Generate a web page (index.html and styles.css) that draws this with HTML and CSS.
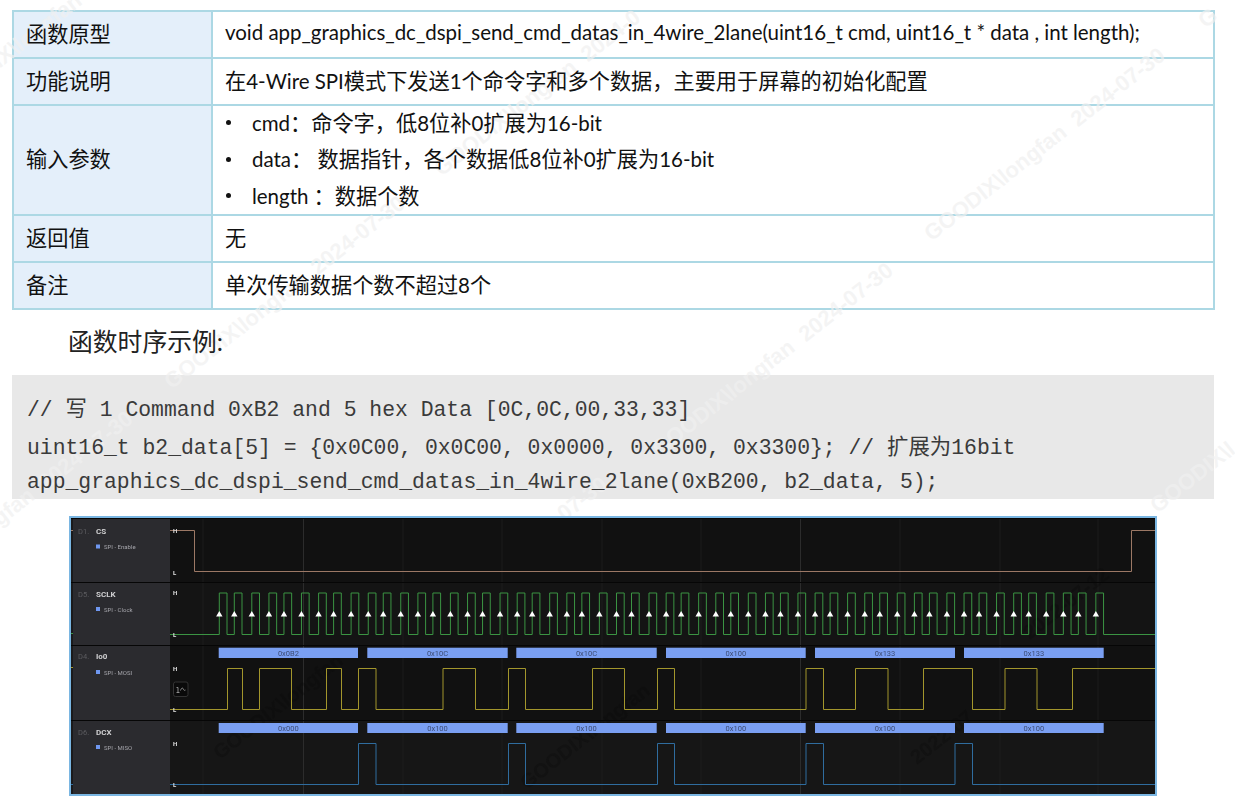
FILE: index.html
```html
<!DOCTYPE html>
<html lang="zh-CN">
<head>
    <meta charset="UTF-8">
    <title>app_graphics_dc_dspi_send_cmd_datas_in_4wire_2lane</title>
    <link rel="stylesheet" href="styles.css">
</head>
<body>
    <table class="api-table">
        <tr>
            <th><span>函数原型</span></th>
            <td><span class="lat">void app_graphics_dc_dspi_send_cmd_datas_in_4wire_2lane(uint16_t cmd, uint16_t * data , int length);</span></td>
        </tr>
        <tr>
            <th><span>功能说明</span></th>
            <td><span>在<span class="lat">4-Wire SPI</span>模式下发送<span class="lat">1</span>个命令字和多个数据，主要用于屏幕的初始化配置</span></td>
        </tr>
        <tr class="row-params">
            <th><span>输入参数</span></th>
            <td>
                <ul class="params">
                    <li><span><span class="lat">cmd</span>：命令字，低<span class="lat">8</span>位补<span class="lat">0</span>扩展为<span class="lat">16-bit</span></span></li>
                    <li><span><span class="lat">data</span>： 数据指针，各个数据低<span class="lat">8</span>位补<span class="lat">0</span>扩展为<span class="lat">16-bit</span></span></li>
                    <li><span><span class="lat">length </span>：数据个数</span></li>
                </ul>
            </td>
        </tr>
        <tr>
            <th><span>返回值</span></th>
            <td><span>无</span></td>
        </tr>
        <tr>
            <th><span>备注</span></th>
            <td><span>单次传输数据个数不超过<span class="lat">8</span>个</span></td>
        </tr>
    </table>

    <p class="section-title">函数时序示例:</p>

    <div class="code">
        <div class="code-line line-1">// 写 1 Command 0xB2 and 5 hex Data [0C,0C,00,33,33]</div>
        <div class="code-line line-2">uint16_t b2_data[5] = {0x0C00, 0x0C00, 0x0000, 0x3300, 0x3300}; // 扩展为16bit</div>
        <div class="code-line line-3">app_graphics_dc_dspi_send_cmd_datas_in_4wire_2lane(0xB200, b2_data, 5);</div>
    </div>

    <!-- logic analyzer capture, coordinates in the viewBox are page pixels -->
    <figure class="capture">
        <svg class="capture-svg" width="1084" height="276" viewBox="71 518 1084 276">
            <rect class="row-a" x="71" y="518" width="1084" height="64"/>
            <rect class="row-b" x="71" y="582" width="1084" height="63"/>
            <rect class="row-a" x="71" y="645" width="1084" height="75"/>
            <rect class="row-c" x="71" y="720" width="1084" height="74"/>

            <path class="grid" d="M203 518V794M403 518V794M502 518V794M602 518V794M701 518V794M900 518V794M1000 518V794M1098 518V794"/>
            <path class="grid-major" d="M303.5 518V794M800.5 518V794"/>

            <text class="mark-dark mark-d1" x="0" y="0">2022-07-12</text>
            <text class="mark-dark mark-d2" x="0" y="0">2022-07</text>
            <text class="mark-dark mark-d3" x="0" y="0">GOODIX\longfan</text>
            <text class="mark-dark mark-d4" x="0" y="0">GOODIX\longfan</text>

            <rect class="strip" x="71" y="518" width="2" height="276"/>
            <rect class="sidebar" x="73" y="518" width="97" height="276"/>
            <path class="divider" d="M71 518.5H1155M71 582.5H1155M71 645.5H1155M71 720.5H1155"/>

            <text class="ch-id" x="78" y="533.5">D1.</text>
            <text class="ch-name" x="96" y="533.5">CS</text>
            <rect class="ch-dot" x="96" y="544.5" width="4" height="4"/>
            <text class="ch-sub" x="104" y="549">SPI - Enable</text>

            <text class="ch-id" x="78" y="596.5">D5.</text>
            <text class="ch-name" x="96" y="596.5">SCLK</text>
            <rect class="ch-dot" x="96" y="607" width="4" height="4"/>
            <text class="ch-sub" x="104" y="611.5">SPI - Clock</text>

            <text class="ch-id" x="78" y="659">D4.</text>
            <text class="ch-name" x="96" y="659">Io0</text>
            <rect class="ch-dot" x="96" y="670" width="4" height="4"/>
            <text class="ch-sub" x="104" y="674.5">SPI - MOSI</text>

            <text class="ch-id" x="78" y="734.5">D6.</text>
            <text class="ch-name" x="96" y="734.5">DCX</text>
            <rect class="ch-dot" x="96" y="745" width="4" height="4"/>
            <text class="ch-sub" x="104" y="749.5">SPI - MISO</text>

            <path class="tick-cs" d="M71 530.5H73"/>
            <path class="tick-clk" d="M71 633.5H73"/>
            <path class="tick-mosi" d="M71 667.5H73"/>
            <path class="tick-miso" d="M71 784.5H73"/>

            <!-- CS -->
            <path class="sig sig-cs" d="M170 530.5H194.5V571.5H1131.5V530.5H1155"/>
            <!-- SCLK: 54 clocks, the edges repeat every 3 -->
            <path class="sig sig-clk" d="M170 634.5H219.3
                v-41.5h7.7v41.5h7.3v-41.5h7.7v41.5h9.8v-41.5h7.7v41.5h9.45
                v-41.5h7.7v41.5h7.3v-41.5h7.7v41.5h9.8v-41.5h7.7v41.5h9.45
                v-41.5h7.7v41.5h7.3v-41.5h7.7v41.5h9.8v-41.5h7.7v41.5h9.45
                v-41.5h7.7v41.5h7.3v-41.5h7.7v41.5h9.8v-41.5h7.7v41.5h9.45
                v-41.5h7.7v41.5h7.3v-41.5h7.7v41.5h9.8v-41.5h7.7v41.5h9.45
                v-41.5h7.7v41.5h7.3v-41.5h7.7v41.5h9.8v-41.5h7.7v41.5h9.45
                v-41.5h7.7v41.5h7.3v-41.5h7.7v41.5h9.8v-41.5h7.7v41.5h9.45
                v-41.5h7.7v41.5h7.3v-41.5h7.7v41.5h9.8v-41.5h7.7v41.5h9.45
                v-41.5h7.7v41.5h7.3v-41.5h7.7v41.5h9.8v-41.5h7.7v41.5h9.45
                v-41.5h7.7v41.5h7.3v-41.5h7.7v41.5h9.8v-41.5h7.7v41.5h9.45
                v-41.5h7.7v41.5h7.3v-41.5h7.7v41.5h9.8v-41.5h7.7v41.5h9.45
                v-41.5h7.7v41.5h7.3v-41.5h7.7v41.5h9.8v-41.5h7.7v41.5h9.45
                v-41.5h7.7v41.5h7.3v-41.5h7.7v41.5h9.8v-41.5h7.7v41.5h9.45
                v-41.5h7.7v41.5h7.3v-41.5h7.7v41.5h9.8v-41.5h7.7v41.5h9.45
                v-41.5h7.7v41.5h7.3v-41.5h7.7v41.5h9.8v-41.5h7.7v41.5h9.45
                v-41.5h7.7v41.5h7.3v-41.5h7.7v41.5h9.8v-41.5h7.7v41.5h9.45
                v-41.5h7.7v41.5h7.3v-41.5h7.7v41.5h9.8v-41.5h7.7v41.5h9.45
                v-41.5h7.7v41.5h7.3v-41.5h7.7v41.5h9.8v-41.5h7.7v41.5h9.45
                H1155"/>
            <path class="edge-marks" d="M219.3 611
                l3.2 5.4h-6.4zm15 0l3.2 5.4h-6.4zm17.5 0l3.2 5.4h-6.4zm17.15 0
                l3.2 5.4h-6.4zm15 0l3.2 5.4h-6.4zm17.5 0l3.2 5.4h-6.4zm17.15 0
                l3.2 5.4h-6.4zm15 0l3.2 5.4h-6.4zm17.5 0l3.2 5.4h-6.4zm17.15 0
                l3.2 5.4h-6.4zm15 0l3.2 5.4h-6.4zm17.5 0l3.2 5.4h-6.4zm17.15 0
                l3.2 5.4h-6.4zm15 0l3.2 5.4h-6.4zm17.5 0l3.2 5.4h-6.4zm17.15 0
                l3.2 5.4h-6.4zm15 0l3.2 5.4h-6.4zm17.5 0l3.2 5.4h-6.4zm17.15 0
                l3.2 5.4h-6.4zm15 0l3.2 5.4h-6.4zm17.5 0l3.2 5.4h-6.4zm17.15 0
                l3.2 5.4h-6.4zm15 0l3.2 5.4h-6.4zm17.5 0l3.2 5.4h-6.4zm17.15 0
                l3.2 5.4h-6.4zm15 0l3.2 5.4h-6.4zm17.5 0l3.2 5.4h-6.4zm17.15 0
                l3.2 5.4h-6.4zm15 0l3.2 5.4h-6.4zm17.5 0l3.2 5.4h-6.4zm17.15 0
                l3.2 5.4h-6.4zm15 0l3.2 5.4h-6.4zm17.5 0l3.2 5.4h-6.4zm17.15 0
                l3.2 5.4h-6.4zm15 0l3.2 5.4h-6.4zm17.5 0l3.2 5.4h-6.4zm17.15 0
                l3.2 5.4h-6.4zm15 0l3.2 5.4h-6.4zm17.5 0l3.2 5.4h-6.4zm17.15 0
                l3.2 5.4h-6.4zm15 0l3.2 5.4h-6.4zm17.5 0l3.2 5.4h-6.4zm17.15 0
                l3.2 5.4h-6.4zm15 0l3.2 5.4h-6.4zm17.5 0l3.2 5.4h-6.4zm17.15 0
                l3.2 5.4h-6.4zm15 0l3.2 5.4h-6.4zm17.5 0l3.2 5.4h-6.4zm17.15 0
                l3.2 5.4h-6.4zm15 0l3.2 5.4h-6.4zm17.5 0l3.2 5.4h-6.4zm17.15 0
                l3.2 5.4h-6.4zm15 0l3.2 5.4h-6.4zm17.5 0l3.2 5.4h-6.4z"/>
            <!-- MOSI -->
            <path class="sig sig-mosi" d="M170 709.5H227.5V668.5H242.5V709.5H259.5V668.5H291.5V709.5H326.5V668.5H341.5V709.5H358.5V668.5H376V709.5H443V668.5H475.5V709.5H508.5V668.5H525.5V709.5H592.5V668.5H624.5V709.5H657.5V668.5H674.5V709.5H806V668.5H823.5V709.5H855.5V668.5H888V709.5H923.5V668.5H972.5V709.5H1005V668.5H1037V709.5H1072.5V668.5H1155"/>
            <!-- MISO -->
            <path class="sig sig-miso" d="M170 784.5H358.5V743.5H376V784.5H508.5V743.5H525.5V784.5H657.5V743.5H674.5V784.5H806V743.5H823.5V784.5H955V743.5H972.5V784.5H1155"/>

            <text class="lvl" x="173" y="532.5">H</text>
            <text class="lvl" x="173" y="574.5">L</text>
            <text class="lvl" x="173" y="595">H</text>
            <text class="lvl" x="173" y="637">L</text>
            <text class="lvl" x="173" y="670.5">H</text>
            <text class="lvl" x="173" y="712">L</text>
            <text class="lvl" x="173" y="745.5">H</text>
            <text class="lvl" x="173" y="787">L</text>

            <rect class="block" x="218.7" y="647.7" width="139.3" height="10.3"/>
            <rect class="block" x="367.3" y="647.7" width="140.4" height="10.3"/>
            <rect class="block" x="516.3" y="647.7" width="140.4" height="10.3"/>
            <rect class="block" x="666" y="647.7" width="139.7" height="10.3"/>
            <rect class="block" x="815" y="647.7" width="140" height="10.3"/>
            <rect class="block" x="964" y="647.7" width="139.7" height="10.3"/>
            <text class="block-text" x="288.4" y="655.5">0x0B2</text>
            <text class="block-text" x="437.5" y="655.5">0x10C</text>
            <text class="block-text" x="586.5" y="655.5">0x10C</text>
            <text class="block-text" x="735.9" y="655.5">0x100</text>
            <text class="block-text" x="885" y="655.5">0x133</text>
            <text class="block-text" x="1033.9" y="655.5">0x133</text>

            <rect class="block" x="218.7" y="723" width="139.3" height="10"/>
            <rect class="block" x="367.3" y="723" width="140.4" height="10"/>
            <rect class="block" x="516.3" y="723" width="140.4" height="10"/>
            <rect class="block" x="666" y="723" width="139.7" height="10"/>
            <rect class="block" x="815" y="723" width="140" height="10"/>
            <rect class="block" x="964" y="723" width="139.7" height="10"/>
            <text class="block-text" x="288.4" y="730.7">0x000</text>
            <text class="block-text" x="437.5" y="730.7">0x100</text>
            <text class="block-text" x="586.5" y="730.7">0x100</text>
            <text class="block-text" x="735.9" y="730.7">0x100</text>
            <text class="block-text" x="885" y="730.7">0x100</text>
            <text class="block-text" x="1033.9" y="730.7">0x100</text>

            <!-- small measure button on the MOSI row -->
            <rect class="tool-btn" x="173.5" y="682" width="14.5" height="14.5" rx="2"/>
            <path class="tool-icon" d="M176.5 687.5H178V692.5M176.5 692.5H179.5M180.5 690.5C181.5 687.5 183 687.5 183.5 689.5C184 690.5 185 690.5 185.5 690"/>
        </svg>
    </figure>

    <div class="marks">
        <div class="wm wm-a">GOODIX\longfan  2024-07-30</div>
        <div class="wm wm-b">GOODIX\longfan  2024-07-30</div>
        <div class="wm wm-c">GOODIX\l</div>
        <div class="wm wm-d">GOODIX\longfan  2024-07-30</div>
        <div class="wm wm-e">GOODIX\longfan  2024-0</div>
        <div class="wm wm-g">gfan  2024-07-30</div>
        <div class="wm wm-h">IX\longfan</div>
        <div class="wm wm-i">G</div>
        <div class="wm wm-j">07-30</div>
    </div>
</body>
</html>
```

FILE: styles.css
```css
html, body {
    margin: 0;
    padding: 0;
}

body {
    position: relative;
    width: 1235px;
    height: 806px;
    padding-top: 10px;
    box-sizing: border-box;
    overflow: hidden;
    background: #fff;
    color: #111;
    font-family: "Lato", "Noto Sans CJK SC", sans-serif;
}

/* Top table */
.api-table {
    border-collapse: collapse;
    table-layout: fixed;
    width: 1203px;
    margin-left: 12px;
    font-size: 21.2px;
}

.api-table tr {
    height: 47px;
}

.api-table .row-params {
    height: 110px;
}

.api-table th,
.api-table td {
    border: 2px solid #acd8e4;
    padding: 0 12px 5px;
    text-align: left;
    font-weight: 400;
}

.api-table .row-params td {
    padding-bottom: 2px;
}

.api-table th {
    width: 173px;
    background: #e4effa;
}

/* cell text stays above the watermark, cell backgrounds stay below it */
.api-table th > span,
.api-table td > span,
.params {
    position: relative;
    z-index: 2;
}

.lat {
    font-size: 20.5px;
    letter-spacing: -0.03px;
}

.params {
    list-style: none;
    margin: 0;
    padding: 0;
    display: flex;
    flex-direction: column;
    gap: 6.5px;
}

.params li {
    display: flex;
    align-items: center;
    height: 30px;
    line-height: 30px;
}

.params li::before {
    content: "";
    width: 5px;
    height: 5px;
    margin: 0 21px 0 1px;
    border-radius: 50%;
    background: #111;
}

/* Heading */
.section-title {
    position: relative;
    z-index: 2;
    margin: 17px 0 0 68px;
    font-size: 24.8px;
    line-height: 30px;
    color: #222;
}

/* Code */
.code {
    width: 1202px;
    height: 124px;
    margin: 18px 0 0 12px;
    padding: 20px 0 0 15px;
    box-sizing: border-box;
    background: #e8e8e8;
    font-family: "Liberation Mono", "Noto Sans CJK SC", monospace;
    font-size: 21.4px;
    color: #3a3a3a;
}

.code-line {
    position: relative;
    z-index: 2;
    height: 30px;
    line-height: 30px;
    white-space: pre;
}

.line-2 {
    margin-top: 8px;
}

.line-3 {
    margin-top: 4px;
}

/* Capture */
.capture {
    position: relative;
    z-index: 3;
    width: 1084px;
    height: 276px;
    margin: 17px 0 0 69px;
    border: 2px solid #7ab6e2;
    overflow: hidden;
}

.capture-svg {
    display: block;
    filter: blur(0.25px);
    font-family: Roboto, sans-serif;
}

.row-a { fill: #111; }
.row-b { fill: #141414; }
.row-c { fill: #161616; }
.strip { fill: #1a1a1c; }
.sidebar { fill: #2b2b2f; }

.grid {
    fill: none;
    stroke: #1d1d1d;
    stroke-width: 1;
}

.grid-major {
    fill: none;
    stroke: #2c2c2c;
    stroke-width: 1;
}

.divider {
    fill: none;
    stroke: #060606;
    stroke-width: 1;
}

.ch-id {
    font-size: 7.5px;
    fill: #5c5c60;
}

.ch-name {
    font-size: 8px;
    font-weight: 700;
    fill: #d0d0d2;
}

.ch-sub {
    font-size: 6px;
    fill: #a4a4aa;
}

.ch-dot { fill: #6f97f0; }

.sig {
    fill: none;
    stroke-width: 1;
}

.sig-cs { stroke: #9c7865; }
.sig-clk { stroke: #3b9443; }
.sig-mosi { stroke: #a3962c; }
.sig-miso { stroke: #2f6c9e; }

.tick-cs { stroke: #9c7865; }
.tick-clk { stroke: #3b9443; }
.tick-mosi { stroke: #a3962c; }
.tick-miso { stroke: #2f6c9e; }

.edge-marks { fill: #fff; }

.lvl {
    font-size: 6px;
    font-weight: 700;
    fill: #e0e0e0;
}

.block {
    fill: #7a9ff2;
}

.block-text {
    font-size: 7.5px;
    fill: #3d4c74;
    text-anchor: middle;
}

.tool-btn {
    fill: #0a0a0a;
    stroke: #333;
    stroke-width: 1;
}

.tool-icon {
    fill: none;
    stroke: #a8a8a8;
    stroke-width: 0.8;
}

.mark-dark {
    font-size: 20px;
    font-family: "Liberation Sans", sans-serif;
    font-weight: 700;
    fill: #0a0a0a;
    fill-opacity: 0.3;
}

.mark-d1 { transform: translate(1030px, 640px) rotate(-38deg); }
.mark-d2 { transform: translate(917px, 765px) rotate(-38deg); }
.mark-d3 { transform: translate(527px, 790px) rotate(-38deg); }
.mark-d4 { transform: translate(220px, 760px) rotate(-38deg); }

/* Watermark */
.marks {
    position: absolute;
    z-index: 1;
    left: 0;
    top: 0;
    width: 1235px;
    height: 806px;
    overflow: hidden;
    pointer-events: none;
}

.wm {
    position: absolute;
    height: 22px;
    line-height: 22px;
    margin-top: -22px;
    font-family: "Liberation Sans", sans-serif;
    font-size: 22px;
    font-weight: 700;
    white-space: pre;
    color: rgba(240, 240, 240, 0.7);
    transform: rotate(-38deg);
    transform-origin: 0 100%;
}

.wm-a { left: 934px; top: 245px; }
.wm-b { left: 662px; top: 460px; }
.wm-c { left: 1160px; top: 517px; }
.wm-d { left: 174px; top: 393px; }
.wm-e { left: 444px; top: 180px; }
.wm-g { left: 2px; top: 530px; }
.wm-h { left: 2px; top: 72px; }
.wm-i { left: 1208px; top: 32px; }
.wm-j { left: 567px; top: 525px; }
```
